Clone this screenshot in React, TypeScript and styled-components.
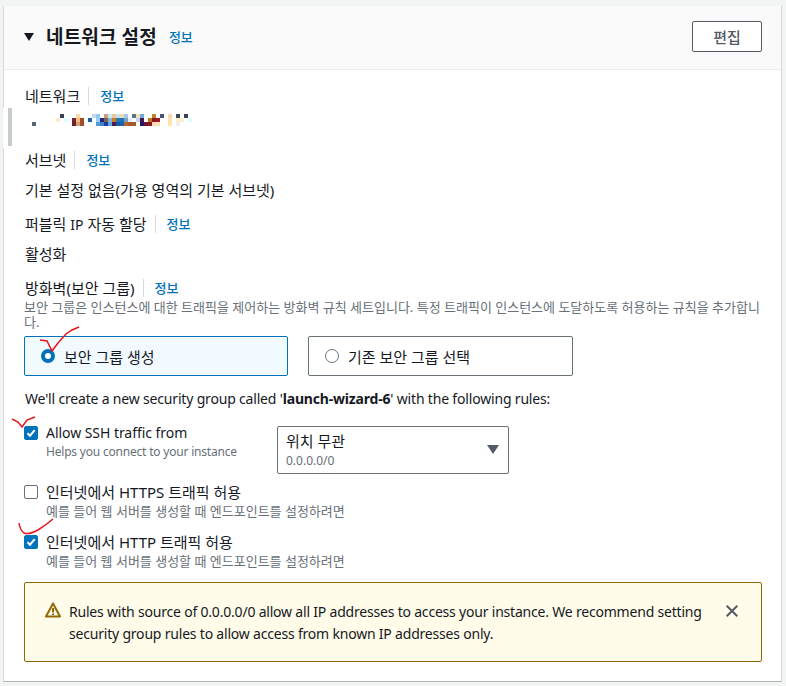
import React from "react";
import styled, { createGlobalStyle } from "styled-components";

const FONT = `"Noto Sans", "Noto Sans CJK KR", sans-serif`;

const Global = createGlobalStyle`
  html, body { margin: 0; padding: 0; background: #f2f3f3; }
  body {
    font-family: ${FONT};
    font-size: 14px;
    color: #16191f;
  }
`;

const Page = styled.div`
  position: relative;
  width: 786px;
  height: 686px;
  box-sizing: border-box;
  padding: 6px 4px 4px 3px;
  overflow: hidden;
`;

const Card = styled.section`
  background: #fff;
  height: 676px;
  box-sizing: border-box;
  border-left: 1px solid #d5dbdb;
  border-right: 1px solid #d5dbdb;
  border-bottom: 1px solid #aab7b8;
`;

const Header = styled.header`
  height: 64px;
  box-sizing: border-box;
  background: #fafafa;
  border-bottom: 1px solid #eaeded;
  display: flex;
  align-items: center;
  padding: 0 19px 2px 20px;
`;

const Arrow = styled.span`
  width: 0;
  height: 0;
  border-left: 5.5px solid transparent;
  border-right: 5.5px solid transparent;
  border-top: 8px solid #16191f;
  margin-right: 12px;
`;

const Title = styled.h2`
  margin: 0 12px 0 0;
  font-size: 19px;
  line-height: 24px;
  font-weight: 700;
  letter-spacing: 0.15px;
`;

const InfoLink = styled.a`
  color: #0073bb;
  font-size: 13px;
  font-weight: 500;
  line-height: 16px;
`;

const EditButton = styled.button`
  margin-left: auto;
  width: 70px;
  height: 31px;
  background: #fff;
  border: 1px solid #545b64;
  border-radius: 2px;
  color: #545b64;
  font: 500 15px ${FONT};
`;

const Body = styled.div`
  padding: 16px 19px 0 20px;
  display: flex;
  flex-direction: column;
`;

const LabelRow = styled.div<{ $top?: number }>`
  display: flex;
  align-items: center;
  height: 20px;
  line-height: 20px;
  font-size: 15px;
  padding-left: 1px;
  margin-top: ${(p) => p.$top ?? 0}px;
`;

const LabelText = styled.span``;

const Latin = styled.span`
  font-size: 14px;
`;

const LabelDivider = styled.span`
  width: 1px;
  height: 18px;
  background: #d5dbdb;
  margin: 0 11px 0 8px;
`;

const Value = styled.div<{ $top: number }>`
  line-height: 20px;
  font-size: 15px;
  padding-left: 1px;
  margin-top: ${(p) => p.$top}px;
`;

const Mosaic = styled.svg`
  display: block;
  margin: 8px 0 0 8px;
`;

const Description = styled.p`
  margin: 2px 0 0;
  width: 738px;
  font-size: 13px;
  line-height: 15px;
  color: #687078;
`;

const RadioRow = styled.div`
  display: flex;
  gap: 20px;
  margin-top: 6px;
`;

const RadioCard = styled.label<{ $checked?: boolean; $width: number }>`
  width: ${(p) => p.$width}px;
  height: 40px;
  box-sizing: border-box;
  display: flex;
  align-items: center;
  gap: 9px;
  padding-left: 16px;
  font-size: 15px;
  border: 1px solid ${(p) => (p.$checked ? "#0073bb" : "#687078")};
  border-radius: 2px;
  background: ${(p) => (p.$checked ? "#f1faff" : "#fff")};
`;

const RadioDot = styled.span<{ $checked?: boolean }>`
  width: 14px;
  height: 14px;
  border-radius: 50%;
  box-sizing: border-box;
  background: #fff;
  border: ${(p) => (p.$checked ? "4.5px solid #0073bb" : "1px solid #687078")};
`;

const Intro = styled.p`
  margin: 13px 0 0;
  padding-left: 1px;
  line-height: 20px;
  letter-spacing: -0.18px;

  strong {
    font-weight: 700;
  }
`;

const SshRow = styled.div`
  display: flex;
  align-items: flex-start;
  margin-top: 17px;
`;

const CheckRow = styled.div<{ $top?: number; $width?: number }>`
  display: flex;
  gap: 8px;
  width: ${(p) => (p.$width ? `${p.$width}px` : "auto")};
  margin-top: ${(p) => p.$top ?? 0}px;
`;

const Box = styled.span<{ $checked?: boolean }>`
  flex: none;
  width: 14px;
  height: 14px;
  margin-top: 8px;
  box-sizing: border-box;
  border-radius: 2px;
  display: flex;
  background: ${(p) => (p.$checked ? "#0073bb" : "#fff")};
  border: 1px solid ${(p) => (p.$checked ? "#0073bb" : "#687078")};
`;

const CheckText = styled.div`
  display: flex;
  flex-direction: column;
`;

const CheckLabel = styled.span<{ $ko?: boolean }>`
  line-height: 20px;
  margin-top: 5px;
  font-size: ${(p) => (p.$ko ? 15 : 14)}px;
  letter-spacing: ${(p) => (p.$ko ? 0 : -0.05)}px;
`;

const CheckHint = styled.span<{ $ko?: boolean }>`
  font-size: ${(p) => (p.$ko ? 13 : 12)}px;
  letter-spacing: ${(p) => (p.$ko ? 0 : -0.2)}px;
  line-height: 16px;
  margin-top: 1px;
  color: #687078;
`;

const SelectBox = styled.div`
  width: 232px;
  height: 48px;
  box-sizing: border-box;
  border: 1px solid #687078;
  border-radius: 2px;
  padding: 4px 15px 0 8px;
  position: relative;
  display: flex;
  flex-direction: column;
`;

const SelectMain = styled.span`
  line-height: 20px;
  font-size: 15px;
`;

const SelectSub = styled.span`
  font-size: 12px;
  line-height: 16px;
  margin-top: 2px;
  color: #687078;
`;

const SelectCaret = styled.span`
  position: absolute;
  right: 9px;
  top: 18px;
  width: 0;
  height: 0;
  border-left: 6px solid transparent;
  border-right: 6px solid transparent;
  border-top: 9px solid #545b64;
`;

const Alert = styled.div`
  margin-top: 13px;
  width: 738px;
  height: 80px;
  box-sizing: border-box;
  background: #fffce9;
  border: 1px solid #906806;
  border-radius: 2px;
  display: flex;
  align-items: flex-start;
  padding: 18px 23px 0 20px;
  color: #16191f;
`;

const AlertIcon = styled.svg`
  flex: none;
  margin-top: 1px;
`;

const AlertText = styled.p`
  margin: 0 0 0 8px;
  flex: 1;
  font-size: 14px;
  line-height: 22px;
  letter-spacing: -0.2px;
`;

const CloseIcon = styled.svg`
  flex: none;
  margin: 4px 0 0 20px;
`;

const SideHandle = styled.span`
  position: absolute;
  left: 8px;
  top: 108px;
  width: 4px;
  height: 38px;
  background: #c6cccc;
`;

const LeftGap = styled.span`
  position: absolute;
  left: 3px;
  top: 108px;
  width: 1px;
  height: 40px;
  background: #fff;
`;

const Scribbles = styled.svg`
  position: absolute;
  left: 0;
  top: 0;
  pointer-events: none;
`;

const row1: [number, string][] = [[7,"#3a4256"],[11,"#fcd7a8"],[15,"#c0d8f0"],[16,"#92c8f0"],[18,"#c8a080"],[19,"#d0e8f0"],[20,"#e8c8a0"],[21,"#c8e0f0"],[22,"#f0d8b0"],[23,"#a0c8f0"],[25,"#5c7488"],[26,"#f0e0c0"],[27,"#7aa8d8"],[30,"#c08030"],[32,"#4a5470"],[34,"#f8dcb0"],[36,"#3a4858"],[38,"#3a4258"]];
const row2: [number, string][] = [[6,"#ffeccc"],[8,"#e0fcff"],[10,"#7a2030"],[11,"#f8c080"],[12,"#a05020"],[14,"#2060b0"],[16,"#98d0f8"],[17,"#202880"],[18,"#806050"],[19,"#80b8d8"],[20,"#c88020"],[21,"#2878b0"],[22,"#2070b8"],[23,"#80a0c0"],[24,"#e0f0ff"],[26,"#c0d8f0"],[27,"#401850"],[29,"#c07820"],[30,"#8a1820"],[31,"#a01828"],[34,"#ffe4b0"],[36,"#ffeecc"],[37,"#ffeecc"],[39,"#e0fcff"]];
const row3: [number, string][] = [[0,"#566470"],[10,"#702030"],[11,"#d0a070"],[12,"#a05030"],[16,"#5898d8"],[17,"#4080c8"],[18,"#1840a0"],[19,"#60a8e0"],[20,"#501850"],[21,"#1858a8"],[22,"#2060b0"],[23,"#b06830"],[24,"#a85828"],[25,"#a85828"],[27,"#281860"],[28,"#701830"],[29,"#8a1820"],[30,"#ffd8b0"],[31,"#ffe0b8"],[34,"#ffe4b0"],[36,"#eeeeee"]];
const rows = [row1, row2, row3];

const Check = () => (
  <svg width="12" height="12" viewBox="0 0 12 12" fill="none">
    <path d="M2.5 6.2 L5 8.7 L9.7 3.2" stroke="#fff" strokeWidth="2" />
  </svg>
);

const Field = ({ label, top }: { label: React.ReactNode; top?: number }) => (
  <LabelRow $top={top}>
    <LabelText>{label}</LabelText>
    <LabelDivider />
    <InfoLink>정보</InfoLink>
  </LabelRow>
);

export default function App() {
  return (
    <Page>
      <Global />
      <Card>
        <Header>
          <Arrow />
          <Title>네트워크 설정</Title>
          <InfoLink>정보</InfoLink>
          <EditButton>편집</EditButton>
        </Header>
        <Body>
          <Field label="네트워크" />
          <Mosaic width="160" height="12" viewBox="0 0 160 12" shapeRendering="crispEdges">
            {rows.map((r, y) =>
              r.map(([i, c]) => <rect key={`${y}-${i}`} x={i * 4} y={y * 4} width="4" height="4" fill={c} />)
            )}
          </Mosaic>
          <Field label="서브넷" top={24} />
          <Value $top={10}>기본 설정 없음(가용 영역의 기본 서브넷)</Value>
          <Field label={<>퍼블릭 <Latin>IP</Latin> 자동 할당</>} top={14} />
          <Value $top={10}>활성화</Value>
          <Field label="방화벽(보안 그룹)" top={14} />
          <Description>
            보안 그룹은 인스턴스에 대한 트래픽을 제어하는 방화벽 규칙 세트입니다. 특정 트래픽이 인스턴스에 도달하도록 허용하는 규칙을 추가합니다.
          </Description>
          <RadioRow>
            <RadioCard $checked $width={264}>
              <RadioDot $checked />
              보안 그룹 생성
            </RadioCard>
            <RadioCard $width={265}>
              <RadioDot />
              기존 보안 그룹 선택
            </RadioCard>
          </RadioRow>
          <Intro>
            We'll create a new security group called '<strong>launch-wizard-6</strong>' with the following rules:
          </Intro>
          <SshRow>
            <CheckRow $width={253} $top={-8}>
              <Box $checked><Check /></Box>
              <CheckText>
                <CheckLabel>Allow SSH traffic from</CheckLabel>
                <CheckHint>Helps you connect to your instance</CheckHint>
              </CheckText>
            </CheckRow>
            <SelectBox>
              <SelectMain>위치 무관</SelectMain>
              <SelectSub>0.0.0.0/0</SelectSub>
              <SelectCaret />
            </SelectBox>
          </SshRow>
          <CheckRow $top={3}>
            <Box />
            <CheckText>
              <CheckLabel $ko>인터넷에서 HTTPS 트래픽 허용</CheckLabel>
              <CheckHint $ko>예를 들어 웹 서버를 생성할 때 엔드포인트를 설정하려면</CheckHint>
            </CheckText>
          </CheckRow>
          <CheckRow $top={8}>
            <Box $checked><Check /></Box>
            <CheckText>
              <CheckLabel $ko>인터넷에서 HTTP 트래픽 허용</CheckLabel>
              <CheckHint $ko>예를 들어 웹 서버를 생성할 때 엔드포인트를 설정하려면</CheckHint>
            </CheckText>
          </CheckRow>
          <Alert>
            <AlertIcon width="16" height="16" viewBox="0 0 16 16" fill="none">
              <path d="M8 1.5 L15 14.5 H1 Z" stroke="#906806" strokeWidth="2" strokeLinejoin="round" />
              <path d="M8 6 V10.5 M8 11.5 V13" stroke="#906806" strokeWidth="2" />
            </AlertIcon>
            <AlertText>
              Rules with source of 0.0.0.0/0 allow all IP addresses to access your instance. We recommend setting security group rules to allow access from known IP addresses only.
            </AlertText>
            <CloseIcon width="12" height="12" viewBox="0 0 12 12" fill="none">
              <path d="M0.7 0.7 L11.3 11.3 M11.3 0.7 L0.7 11.3" stroke="#545b64" strokeWidth="2" />
            </CloseIcon>
          </Alert>
        </Body>
      </Card>
      <LeftGap />
      <SideHandle />
      <Scribbles width="786" height="686" viewBox="0 0 786 686" fill="none">
        <path d="M40 340 L47 341 L52 351 L58 343 L66 334 L72 330 L79 327" stroke="#e8141c" strokeWidth="1.5" />
        <path d="M12 419 L18 422 L22 427 L27 420 L35 417" stroke="#e8141c" strokeWidth="1.5" />
        <path d="M19 523 Q20 530 24 533 Q29 535 38 530 Q46 525 53 519" stroke="#e8141c" strokeWidth="1.5" />
      </Scribbles>
    </Page>
  );
}
